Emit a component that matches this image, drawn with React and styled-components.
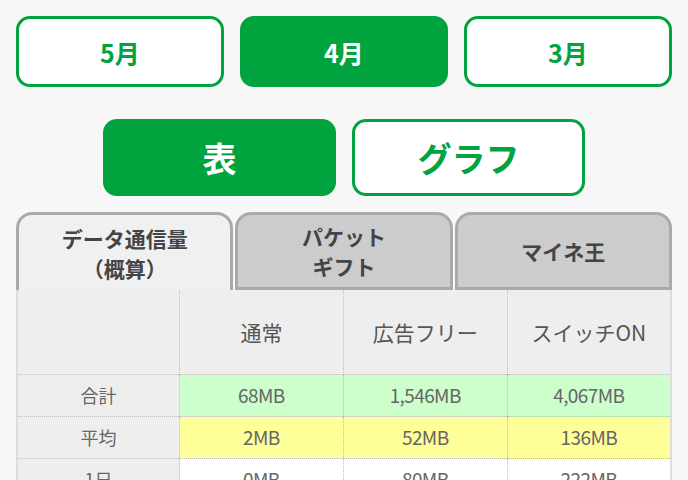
import styled, { createGlobalStyle } from 'styled-components';

const Global = createGlobalStyle`
	body {
		margin: 0;
		background: #f7f7f7;
		font-family: 'Noto Sans CJK JP', 'Noto Sans', sans-serif;
	}
`
const Page = styled.div`
	padding: 16px 16px 0;
`
const MonthRow = styled.div`
	display: grid;
	grid-template-columns: repeat(3, 1fr);
	gap: 16px;
`
const ViewRow = styled.div`
	display: flex;
	justify-content: center;
	gap: 16px;
	margin-top: 32px;
`
const Btn = styled.button`
	box-sizing: border-box;
	border: 3px solid #00a33e;
	border-radius: 14px;
	background: ${p => p.$active ? '#00a33e' : '#ffffff'};
	color: ${p => p.$active ? '#ffffff' : '#00a33e'};
	font-family: 'Noto Sans CJK JP', sans-serif;
	font-weight: 700;
	cursor: pointer;
`
const MonthBtn = styled(Btn)`
	height: 71px;
	font-size: 25px;
`
const ViewBtn = styled(Btn)`
	width: 233px;
	height: 77px;
	font-size: 34px;
`
const Tabs = styled.div`
	display: grid;
	grid-template-columns: repeat(3, 1fr);
	gap: 2px;
	margin-top: 16px;
`
const Tab = styled.div`
	box-sizing: border-box;
	height: 78px;
	display: flex;
	align-items: center;
	justify-content: center;
	text-align: center;
	border: 3px solid #aaaaaa;
	border-bottom: ${p => p.$active ? 'none' : '3px solid #aaaaaa'};
	border-radius: 16px 16px 0 0;
	background: ${p => p.$active ? '#f0f0f0' : '#cccccc'};
	color: #444;
	font-size: 21px;
	font-weight: 700;
	line-height: 30px;
`
const Table = styled.table`
	width: 100%;
	border-collapse: collapse;
	table-layout: fixed;
	background: #eeeeee;
	border-left: 2px solid #dddddd;
	border-right: 2px solid #dddddd;
	color: #666;
`
const Head = styled.th`
	height: 84px;
	padding: 0;
	font-size: 21px;
	font-weight: 400;
	color: #555;
	border-left: 1px dotted #bbbbbb;
	&:first-child { border-left: none; width: 161px; }
`
const Row = styled.tr`
	border-top: 1px dotted #bbbbbb;
`
const Label = styled.td`
	height: 41px;
	padding: 0;
	text-align: center;
	font-size: 18px;
	line-height: 1.2;
`
const Cell = styled.td`
	padding: 0;
	text-align: center;
	font-size: 19px;
	line-height: 1.2;
	letter-spacing: -0.6px;
	border-left: 1px dotted #bbbbbb;
	background: ${p => p.$bg};
`

const rows = [
	{ label: '合計', bg: '#ccffcc', values: ['68MB', '1,546MB', '4,067MB'] },
	{ label: '平均', bg: '#ffff99', values: ['2MB', '52MB', '136MB'] },
	{ label: '1日', bg: '#ffffff', values: ['0MB', '80MB', '222MB'] },
]

const App = () => {
	return (
		<>
			<Global />
			<Page>
				<MonthRow>
					<MonthBtn>5月</MonthBtn>
					<MonthBtn $active>4月</MonthBtn>
					<MonthBtn>3月</MonthBtn>
				</MonthRow>
				<ViewRow>
					<ViewBtn $active>表</ViewBtn>
					<ViewBtn>グラフ</ViewBtn>
				</ViewRow>
				<Tabs>
					<Tab $active>データ通信量<br />（概算）</Tab>
					<Tab>パケット<br />ギフト</Tab>
					<Tab>マイネ王</Tab>
				</Tabs>
				<Table>
					<thead>
						<tr>
							<Head></Head>
							<Head>通常</Head>
							<Head>広告フリー</Head>
							<Head>スイッチON</Head>
						</tr>
					</thead>
					<tbody>
						{rows.map(r => (
							<Row key={r.label}>
								<Label>{r.label}</Label>
								{r.values.map((v, i) => <Cell key={i} $bg={r.bg}>{v}</Cell>)}
							</Row>
						))}
					</tbody>
				</Table>
			</Page>
		</>
	)
}

export default App;
